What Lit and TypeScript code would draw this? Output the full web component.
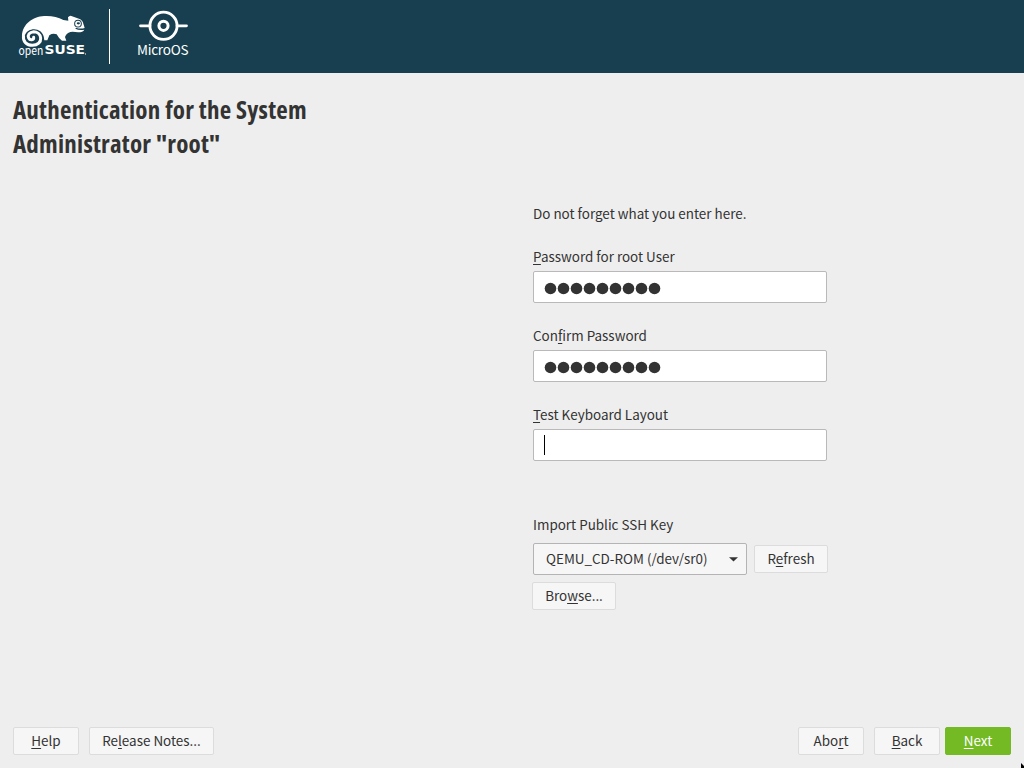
import { LitElement, html, css } from "lit";
import { customElement, property } from "lit/decorators.js";

// Renders a label whose accelerator character is marked with "&".
const mnemonic = (label: string) => {
  const i = label.indexOf("&");
  return i < 0
    ? html`${label}`
    : html`${label.slice(0, i)}<span class="key">${label[i + 1]}</span>${label.slice(i + 2)}`;
};

const keyStyle = css`
  .key { text-decoration: underline 1px; text-underline-offset: 2px; text-decoration-skip-ink: none; }
`;

@customElement("y-button")
class YButton extends LitElement {
  @property() label = "";
  @property({ type: Boolean, reflect: true }) primary = false;
  static styles = [keyStyle, css`
    :host { display: block; flex: none; }
    button {
      display: block; width: 100%; height: 28px; padding: 0 0 1px; margin: 0;
      border: 1px solid #dcdcdc; border-radius: 2px; background: #f6f6f6;
      color: #333; font: inherit; line-height: 25px; letter-spacing: inherit; text-align: center; white-space: nowrap;
    }
    :host([primary]) button { background: #73ba25; border-color: #73ba25; color: #fff; }
  `];
  render() { return html`<button>${mnemonic(this.label)}</button>`; }
}

@customElement("y-field")
class YField extends LitElement {
  @property() label = "";
  @property({ type: Number }) count = 0;
  @property({ type: Boolean }) caret = false;
  static styles = [keyStyle, css`
    :host { display: block; height: 79px; }
    .label { height: 22px; line-height: 22px; margin-bottom: 4px; white-space: nowrap; }
    .box {
      box-sizing: border-box; height: 32px; border: 1px solid #b9b9b9; border-radius: 2px;
      background: #fff; display: flex; align-items: center; padding: 2px 0 0 10px;
    }
    .dot { display: block; width: 13px; height: 13px; fill: #333; }
    .caret { width: 1px; height: 20px; margin: -3px 0 0 0; background: #000; }
  `];
  render() {
    return html`<div class="label">${mnemonic(this.label)}</div>
      <div class="box">
        ${Array.from({ length: this.count }, () => html`<svg class="dot" viewBox="0 0 13 13"><circle cx="6.500" cy="6.500" r="5.800"/></svg>`)}
        ${this.caret ? html`<span class="caret"></span>` : ""}
      </div>`;
  }
}

@customElement("app-root")
class AppRoot extends LitElement {
  static styles = css`
    :host {
      display: flex; flex-direction: column; width: 1024px; height: 768px; overflow: hidden;
      background: #eee; color: #333; position: relative;
      font: 13.45px "Noto Sans CJK SC", "Noto Sans", sans-serif;
      font-variant-ligatures: none;
    }
    header { flex: none; height: 73px; background: #173f4f; display: flex; }
    header svg { display: block; }
    h1 {
      margin: 19px 0 0 13px; height: 68px; font: 700 25px/34px "Open Sans", sans-serif;
      font-stretch: 75%; letter-spacing: .22px; white-space: nowrap;
    }
    main { flex: 1; padding: 42px 0 0 533px; }
    .form { width: 294px; }
    .note { height: 22px; line-height: 22px; margin-bottom: 21px; }
    .ssh { line-height: 22px; margin: 31px 0 8px; height: 22px; }
    .row { display: flex; align-items: center; gap: 7px; width: 295px; }
    .select {
      box-sizing: border-box; width: 214px; height: 32px; border: 1px solid #b4b4b4; border-radius: 2px;
      background: #f6f6f6; display: flex; align-items: center; justify-content: space-between; padding: 0 8px 0 12px;
    }
    .select span { padding-bottom: 2px; }
    .refresh { width: 74px; }
    .browse { width: 84px; margin: 7px 0 0 -1px; }
    footer { flex: none; display: flex; padding: 0 13px 13px; }
    .help { width: 66px; margin-right: 10px; }
    .notes { width: 125px; margin-right: auto; }
    .abort { width: 66px; margin-right: 10px; }
    .back { width: 66px; margin-right: 5px; }
    .next { width: 66px; }
    .cursor { position: absolute; right: 0; bottom: 0; }
  `;
  render() {
    return html`
      <header>
        <svg width="200" height="73" viewBox="0 0 200 73" fill="#fff">
          <g transform="translate(10 5) scale(.33333)">
            <path d="M36 96C35 63 62 38 96 34C120 31 142 36 160 45L175 47L174 37Q179 31 184 33L207 41Q218 45 220 56L224 69Q211 73 198 68L196 71Q208 77 223 74Q219 82 204 82L188 80C178 80 172 84 168 90L165 96L169 107L156 107Q146 100 140 88Q128 84 118 91L112 106L103 106Q102 88 91 79C76 67 52 72 45 90Z"/>
            <path d="M40.500 93C38 111 51 121 67 121C84 121 93 111 92 99C91 87 81 80 71 80C58 81 52 91 56 99C60 107 72 105 71 97" fill="none" stroke="#fff" stroke-width="9" stroke-linecap="round"/>
            <circle cx="204" cy="56" r="11.500" fill="#173f4f"/>
            <circle cx="204" cy="56" r="8.500"/>
            <ellipse cx="205" cy="55" rx="5" ry="3.500" fill="#173f4f"/>
          </g>
          <text x="18.500" y="54.600" font-family="Noto Sans CJK SC" font-size="12" textLength="24.800" lengthAdjust="spacingAndGlyphs">open</text>
          <text x="44.500" y="54.400" font-family="DejaVu Sans" font-weight="700" font-size="12.500" textLength="40.500" lengthAdjust="spacingAndGlyphs">SUSE</text>
          <rect x="85" y="53.500" width="1" height="1"/>
          <rect x="109" y="9" width="1" height="55"/>
          <g fill="none" stroke="#fff" stroke-width="2.800">
            <circle cx="163.500" cy="25.800" r="13.600"/>
            <circle cx="163.500" cy="25.800" r="4.600" stroke-width="3"/>
            <path d="M140.500 25.800H150M177 25.800H186.500" stroke-linecap="round"/>
          </g>
          <text x="137" y="55" font-family="Noto Sans CJK SC" font-size="13.500" textLength="51.500">MicroOS</text>
        </svg>
      </header>
      <h1>Authentication for the System<br>Administrator "root"</h1>
      <main>
        <div class="form">
          <div class="note">Do not forget what you enter here.</div>
          <y-field label="&Password for root User" count="9"></y-field>
          <y-field label="Con&firm Password" count="9"></y-field>
          <y-field label="&Test Keyboard Layout" caret></y-field>
          <div class="ssh">Import Public SSH Key</div>
          <div class="row">
            <div class="select"><span>QEMU_CD-ROM (/dev/sr0)</span>
              <svg width="9" height="5" viewBox="0 0 9 5"><path d="M0 .2H9L4.5 4.6Z" fill="#333"/></svg>
            </div>
            <y-button class="refresh" label="R&efresh"></y-button>
          </div>
          <y-button class="browse" label="Bro&wse..."></y-button>
        </div>
      </main>
      <footer>
        <y-button class="help" label="&Help"></y-button>
        <y-button class="notes" label="Re&lease Notes..."></y-button>
        <y-button class="abort" label="Abo&rt"></y-button>
        <y-button class="back" label="&Back"></y-button>
        <y-button class="next" label="&Next" primary></y-button>
      </footer>
      <svg class="cursor" width="4" height="5" viewBox="0 0 4 5"><path d="M1 0L4 3V5H1Z" fill="#000"/></svg>
    `;
  }
}
